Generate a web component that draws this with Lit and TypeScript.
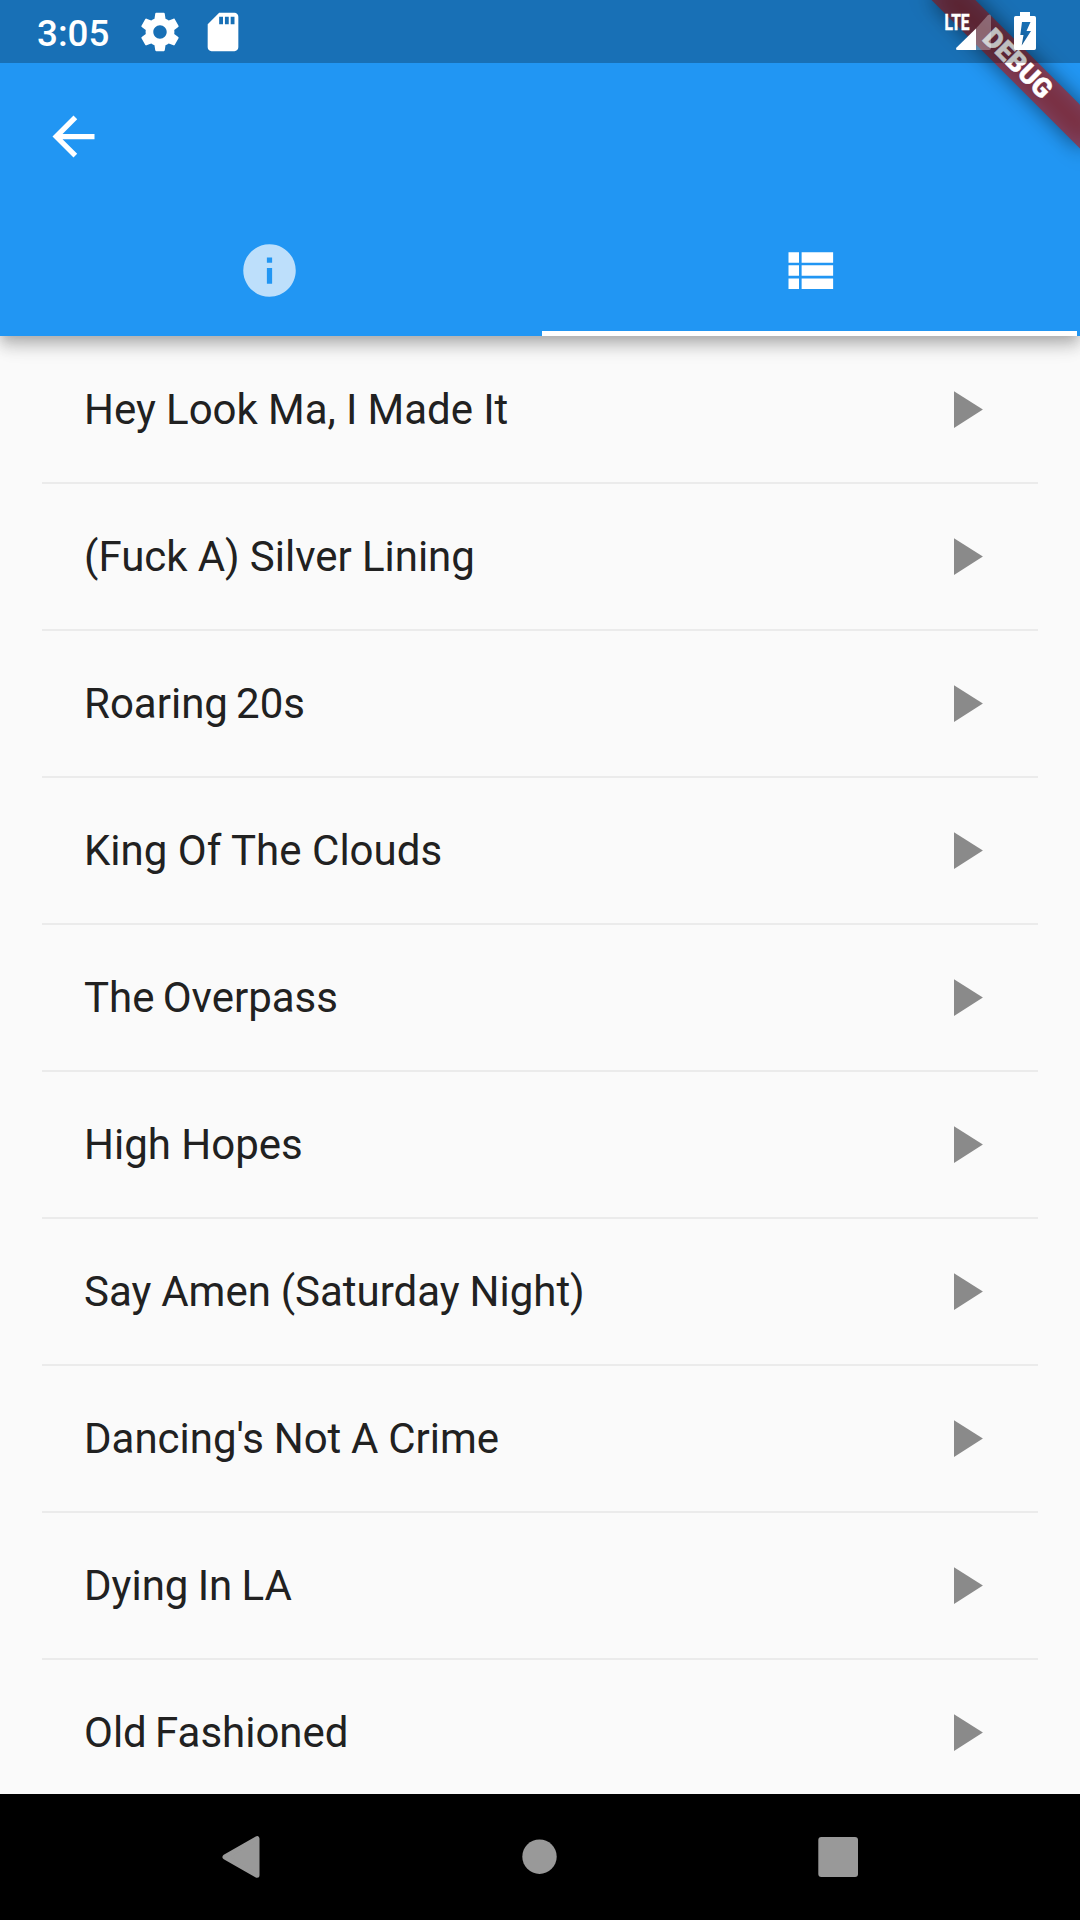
import { LitElement, html, css, svg } from "lit";
import { customElement, property } from "lit/decorators.js";

const ICONS = {
  back: "M20 11H7.83l5.59-5.59L12 4l-8 8 8 8 1.41-1.41L7.83 13H20v-2z",
  info: "M12 2C6.48 2 2 6.48 2 12s4.48 10 10 10 10-4.48 10-10S17.52 2 12 2zm1 15h-2v-6h2v6zm0-8h-2V7h2v2z",
  list: "M4 14h4v-4H4v4zm0 5h4v-4H4v4zM4 9h4V5H4v4zm5 5h12v-4H9v4zm0 5h12v-4H9v4zM9 5v4h12V5H9z",
  play: "M8 5v14l11-7z",
  settings:
    "M19.43 12.98c.04-.32.07-.64.07-.98s-.03-.66-.07-.98l2.11-1.65c.19-.15.24-.42.12-.64l-2-3.46c-.12-.22-.39-.3-.61-.22l-2.49 1c-.52-.4-1.08-.73-1.69-.98l-.38-2.65C14.46 2.18 14.25 2 14 2h-4c-.25 0-.46.18-.49.42l-.38 2.65c-.61.25-1.17.59-1.69.98l-2.49-1c-.23-.09-.49 0-.61.22l-2 3.46c-.13.22-.07.49.12.64l2.11 1.65c-.04.32-.07.65-.07.98s.03.66.07.98l-2.11 1.65c-.19.15-.24.42-.12.64l2 3.46c.12.22.39.3.61.22l2.49-1c.52.4 1.08.73 1.69.98l.38 2.65c.03.24.24.42.49.42h4c.25 0 .46-.18.49-.42l.38-2.65c.61-.25 1.17-.59 1.69-.98l2.49 1c.23.09.49 0 .61-.22l2-3.46c.12-.22.07-.49-.12-.64l-2.11-1.65zM12 15.5c-1.93 0-3.5-1.57-3.5-3.5s1.57-3.5 3.5-3.5 3.5 1.57 3.5 3.5-1.57 3.5-3.5 3.5z",
  sd: "M18 2h-8L4.02 8 4 20c0 1.1.9 2 2 2h12c1.1 0 2-.9 2-2V4c0-1.1-.9-2-2-2zm-6 6h-2V4h2v4zm3 0h-2V4h2v4zm3 0h-2V4h2v4z",
};

@customElement("md-icon")
class MdIcon extends LitElement {
  @property() name: keyof typeof ICONS = "play";
  static styles = css`
    :host { display: block; width: 63px; height: 63px; flex: none; }
    .glyph { display: block; width: 100%; height: 100%; fill: currentColor; }
  `;
  render() {
    return html`<svg class="glyph" viewBox="0 0 24 24">${svg`<path d=${ICONS[this.name]} />`}</svg>`;
  }
}

@customElement("status-bar")
class StatusBar extends LitElement {
  static styles = css`
    :host {
      display: flex; align-items: center; height: 63px; box-sizing: border-box;
      padding: 0 43px 0 37px; background: rgba(0, 0, 0, 0.25); color: #fff;
    }
    .time { font: 500 36.75px/43px Roboto, sans-serif; padding-top: 3px; width: 99.5px; }
    .small { width: 46px; height: 46px; }
    .sd { margin-left: 17px; }
    .space { flex: 1; }
    .signal { display: block; width: 48px; height: 63px; }
    .battery { display: block; width: 24px; height: 63px; margin-left: 21px; }
    .lte { font: 700 22.5px Roboto, sans-serif; stroke: #fff; stroke-width: 0.6px; }
  `;
  render() {
    return html`
      <span class="time">3:05</span>
      <md-icon class="small" name="settings"></md-icon>
      <md-icon class="small sd" name="sd"></md-icon>
      <span class="space"></span>
      <svg class="signal" viewBox="944 0 48 63" fill="#fff">
        <text class="lte" x="944.5" y="29.7" textLength="25" lengthAdjust="spacingAndGlyphs">LTE</text>
        <path fill-opacity=".3" d="M976 28.5L987.6 15.6Q991 13 991 17V48Q991 50 989 50H976z" />
        <path d="M976 28.5V50H957.5Q955 49.5 956.6 47.4z" />
      </svg>
      <svg class="battery" viewBox="1013 0 24 63" fill="#fff">
        <path fill-rule="evenodd" d="M1020 12h10v4h4.300q1.700 0 1.700 1.700v30.600q0 1.700-1.700 1.700h-18.600q-1.700 0-1.700-1.700v-30.600q0-1.700 1.700-1.700h4.300zM1022 22L1020.300 35H1023.500L1021.700 45.500L1031 31H1026.500L1030.500 22z" />
      </svg>
    `;
  }
}

@customElement("track-row")
class TrackRow extends LitElement {
  @property() name = "";
  @property({ type: Number }) gap = 0;
  static styles = css`
    :host {
      display: flex; align-items: center; justify-content: space-between;
      box-sizing: border-box; height: 147px; margin: 0 42px; padding: 0 42px 1px;
      border-bottom: 2px solid #ebebeb;
    }
    .title { font: 400 42px/49px Roboto, sans-serif; color: #212121; white-space: nowrap; }
    .play { color: #8a8a8a; }
  `;
  render() {
    return html`<span class="title" style="word-spacing:${this.gap}px">${this.name}</span
      ><md-icon class="play" name="play"></md-icon>`;
  }
}

@customElement("app-root")
class AppRoot extends LitElement {
  // Each title carries its own word-space correction in pixels.
  private tracks: [string, number][] = [
    ["Hey Look Ma, I Made It", -0.25],
    ["(Fuck A) Silver Lining", -0.3],
    ["Roaring 20s", -2.2],
    ["King Of The Clouds", 0.1],
    ["The Overpass", -2.2],
    ["High Hopes", 0],
    ["Say Amen (Saturday Night)", -0.6],
    ["Dancing's Not A Crime", -0.7],
    ["Dying In LA", -1.2],
    ["Old Fashioned", -2.2],
  ];
  static styles = css`
    :host {
      display: flex; flex-direction: column; position: relative; width: 1080px; height: 1920px;
      overflow: hidden; background: #fafafa;
    }
    .header {
      flex: none; height: 336px; box-sizing: border-box; padding-top: 63px; background: #2196f3; color: #fff;
      position: relative; z-index: 1;
      box-shadow: 0 5px 10.5px -2.600px rgba(0, 0, 0, 0.17), 0 12px 13px rgba(0, 0, 0, 0.14),
        0 2.600px 26px rgba(0, 0, 0, 0.12);
    }
    .toolbar { display: flex; align-items: center; height: 147px; padding-left: 42px; }
    .tabs { display: grid; grid-template-columns: 1fr 1fr; height: 126px; }
    .tab {
      display: flex; flex-direction: column; align-items: center; justify-content: space-between;
      padding: 29px 2.600px 0 2.400px;
    }
    .tabicon { margin-right: 1.200px; }
    .idle { opacity: 0.7; }
    .indicator { align-self: stretch; height: 5.250px; }
    .active .indicator { background: #fff; }
    .list { flex: 1; min-height: 0; overflow: hidden; padding-top: 1px; }
    .nav { flex: none; height: 126px; background: #000; display: block; }
    .status { position: absolute; inset: 0 0 auto 0; z-index: 3; }
    .corner { position: absolute; top: 0; right: 0; width: 200px; height: 200px; overflow: hidden; z-index: 2; }
    .pivot { position: absolute; left: 200px; top: 0; width: 0; height: 0; transform: rotate(45deg); }
    .shade, .ribbon { position: absolute; left: -105px; top: 73.5px; width: 210px; height: 31.5px; }
    .shade { background: rgba(0, 0, 0, 0.5); filter: blur(10.4px); }
    .ribbon {
      background: rgba(183, 28, 28, 0.627); color: #fff; text-align: center; text-indent: 2px;
      font: 900 26.775px/31.5px Roboto, sans-serif; -webkit-text-stroke: 0.5px #fff;
    }
  `;
  render() {
    return html`
      <header class="header">
        <div class="toolbar"><md-icon name="back"></md-icon></div>
        <div class="tabs">
          <div class="tab"><md-icon class="tabicon idle" name="info"></md-icon><div class="indicator"></div></div>
          <div class="tab active"><md-icon class="tabicon" name="list"></md-icon><div class="indicator"></div></div>
        </div>
      </header>
      <main class="list">${this.tracks.map(([t, g]) => html`<track-row .name=${t} .gap=${g}></track-row>`)}</main>
      <svg class="nav" viewBox="0 1794 1080 126" fill="#999">
        <path stroke="#999" stroke-width="5" stroke-linejoin="round" d="M257 1838.700V1875.300L225 1857z" />
        <circle cx="539.500" cy="1856.700" r="17.200" />
        <rect x="818.300" y="1837" width="39.700" height="40" rx="3" />
      </svg>
      <div class="corner"><div class="pivot"><div class="shade"></div><div class="ribbon">DEBUG</div></div></div>
      <status-bar class="status"></status-bar>
    `;
  }
}
